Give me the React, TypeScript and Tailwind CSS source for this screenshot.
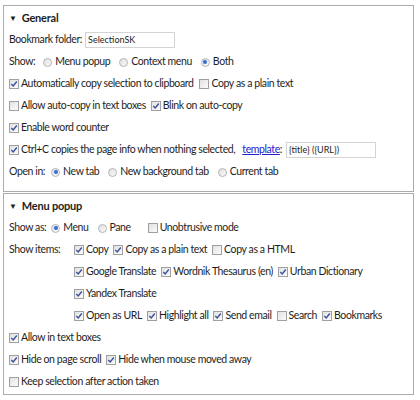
import React from "react";

function Check({ on }: { on?: boolean }) {
  return (
    <span className="inline-flex h-[10px] w-[10px] shrink-0 items-center justify-center border border-[#a0a0a0] bg-gradient-to-br from-[#e2e2e2] to-[#fbfbfb] mr-[2px]">
      {on && (
        <svg width="8" height="8" viewBox="0 0 8 8">
          <path d="M1.3 4.1 L3.2 6 L6.8 1.5" fill="none" stroke="#3b4f9c" strokeWidth="1.4" />
        </svg>
      )}
    </span>
  );
}

function Radio({ on }: { on?: boolean }) {
  return (
    <span className="inline-flex h-[9px] w-[9px] shrink-0 items-center justify-center rounded-full border border-[#b4b4b4] bg-gradient-to-br from-[#e0e0e0] to-[#fafafa] mr-[3px]">
      {on && <span className="h-[4px] w-[4px] rounded-full bg-[#2f6fd6]" />}
    </span>
  );
}

function C({ on, children }: { on?: boolean; children: React.ReactNode }) {
  return (
    <span className="inline-flex items-center mr-[5px]">
      <Check on={on} />
      {children}
    </span>
  );
}

function R({ on, children }: { on?: boolean; children: React.ReactNode }) {
  return (
    <span className="inline-flex items-center mr-[9px]">
      <Radio on={on} />
      {children}
    </span>
  );
}

function Row({ children, className = "" }: { children: React.ReactNode; className?: string }) {
  return <div className={"flex h-[22px] items-center whitespace-nowrap " + className}>{children}</div>;
}

function Head({ title }: { title: string }) {
  return (
    <div className="flex h-[22px] items-center font-bold text-[11px] tracking-[-0.2px]">
      <span className="mr-[5px] text-[8px]">▼</span>
      {title}
    </div>
  );
}

export default function App() {
  return (
    <div className="h-[400px] w-[420px] bg-white pl-[3px] pt-[5px] text-[10.5px] tracking-[-0.4px] text-[#1e1e1e] [font-family:Lato,'Noto_Sans',sans-serif]">
      <section className="h-[187px] w-[411px] border border-[#ababab] px-[5px] pt-[1px]">
        <Head title="General" />
        <Row>
          <span className="mr-[3px]">Bookmark folder:</span>
          <span className="flex h-[16px] w-[90px] items-center border border-[#d4d4d4] px-[2px] text-[9px] tracking-normal">SelectionSK</span>
        </Row>
        <Row>
          <span className="mr-[8px]">Show:</span>
          <R>Menu popup</R>
          <R>Context menu</R>
          <R on>Both</R>
        </Row>
        <Row>
          <C on>Automatically copy selection to clipboard</C>
          <span className="ml-[1px]" />
          <C>Copy as a plain text</C>
        </Row>
        <Row>
          <C>Allow auto-copy in text boxes</C>
          <C on>Blink on auto-copy</C>
        </Row>
        <Row>
          <C on>Enable word counter</C>
        </Row>
        <Row>
          <C on>Ctrl+C copies the page info when nothing selected,</C>
          <span className="ml-[2px] text-[#2222cc] underline">template</span>
          <span className="mr-[4px]">:</span>
          <span className="flex h-[16px] w-[90px] items-center border border-[#d4d4d4] px-[2px] text-[9px] tracking-normal">{"{title} ({URL})"}</span>
        </Row>
        <Row>
          <span className="mr-[6px]">Open in:</span>
          <R on>New tab</R>
          <R>New background tab</R>
          <R>Current tab</R>
        </Row>
      </section>
      <section className="mt-[1px] h-[202px] w-[411px] border border-[#ababab] px-[5px] pt-[1px]">
        <Head title="Menu popup" />
        <Row>
          <span className="mr-[5px]">Show as:</span>
          <R on>Menu</R>
          <R>Pane</R>
          <span className="ml-[8px]" />
          <C>Unobtrusive mode</C>
        </Row>
        <Row>
          <span className="w-[65px]">Show items:</span>
          <C on>Copy</C>
          <C on>Copy as a plain text</C>
          <C>Copy as a HTML</C>
        </Row>
        <Row className="pl-[65px]">
          <C on>Google Translate</C>
          <C on>Wordnik Thesaurus (en)</C>
          <C on>Urban Dictionary</C>
        </Row>
        <Row className="pl-[65px]">
          <C on>Yandex Translate</C>
        </Row>
        <Row className="pl-[65px]">
          <C on>Open as URL</C>
          <C on>Highlight all</C>
          <C on>Send email</C>
          <C>Search</C>
          <C on>Bookmarks</C>
        </Row>
        <Row>
          <C on>Allow in text boxes</C>
        </Row>
        <Row>
          <C on>Hide on page scroll</C>
          <C on>Hide when mouse moved away</C>
        </Row>
        <Row>
          <C>Keep selection after action taken</C>
        </Row>
      </section>
    </div>
  );
}
